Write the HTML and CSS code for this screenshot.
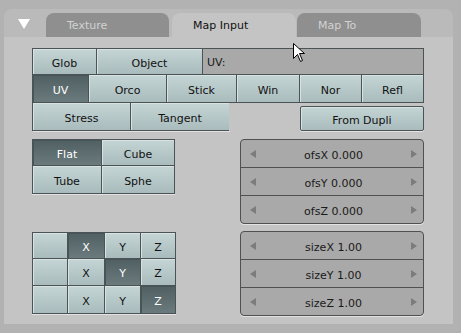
FILE: index.html
```html
<!DOCTYPE html>
<html>
<head>
    <title>Map Input</title>
    <link rel="stylesheet" href="styles.css">
</head>
<body>
    <div class="panel">
        <div class="header">
            <span class="toggle">
                <svg width="12" height="10" viewBox="0 0 12 10"><polygon points="0,0 12,0 6,10" fill="#fff"/></svg>
            </span>
            <div class="tab tab-texture">Texture</div>
            <div class="tab tab-active">Map Input</div>
            <div class="tab tab-mapto">Map To</div>
        </div>

        <div class="body">
            <div class="coords">
                <div class="row row-1">
                    <div class="btn">Glob</div>
                    <div class="btn">Object</div>
                    <div class="cell-field">UV:</div>
                </div>
                <div class="row row-2">
                    <div class="btn pressed">UV</div>
                    <div class="btn">Orco</div>
                    <div class="btn">Stick</div>
                    <div class="btn">Win</div>
                    <div class="btn">Nor</div>
                    <div class="btn">Refl</div>
                </div>
                <div class="row row-3">
                    <div class="btn">Stress</div>
                    <div class="btn">Tangent</div>
                    <div class="empty"></div>
                    <div class="btn solo">From Dupli</div>
                </div>
            </div>

            <div class="lower">
                <div class="col-left">
                    <div class="grid proj">
                        <div class="btn pressed">Flat</div>
                        <div class="btn">Cube</div>
                        <div class="btn">Tube</div>
                        <div class="btn">Sphe</div>
                    </div>

                    <div class="grid axes">
                        <div class="btn"></div>
                        <div class="btn pressed">X</div>
                        <div class="btn">Y</div>
                        <div class="btn">Z</div>
                        <div class="btn"></div>
                        <div class="btn">X</div>
                        <div class="btn pressed">Y</div>
                        <div class="btn">Z</div>
                        <div class="btn"></div>
                        <div class="btn">X</div>
                        <div class="btn">Y</div>
                        <div class="btn pressed">Z</div>
                    </div>
                </div>

                <div class="col-right">
                    <div class="num-group">
                        <div class="num"><span class="arrow-l"></span><span class="num-label">ofsX 0.000</span><span class="arrow-r"></span></div>
                        <div class="num"><span class="arrow-l"></span><span class="num-label">ofsY 0.000</span><span class="arrow-r"></span></div>
                        <div class="num"><span class="arrow-l"></span><span class="num-label">ofsZ 0.000</span><span class="arrow-r"></span></div>
                    </div>
                    <div class="num-group size-group">
                        <div class="num"><span class="arrow-l"></span><span class="num-label">sizeX 1.00</span><span class="arrow-r"></span></div>
                        <div class="num"><span class="arrow-l"></span><span class="num-label">sizeY 1.00</span><span class="arrow-r"></span></div>
                        <div class="num"><span class="arrow-l"></span><span class="num-label">sizeZ 1.00</span><span class="arrow-r"></span></div>
                    </div>
                </div>
            </div>
        </div>
    </div>

    <svg class="cursor" width="13" height="20" viewBox="0 0 13 20">
        <path d="M0.5,0.5 L0.5,15.5 L4.5,11.5 L7.5,18.5 L9.5,17.5 L6.5,10.5 L11.5,10.5 Z" fill="#fff" stroke="#000" stroke-width="1"/>
    </svg>
</body>
</html>
```

FILE: styles.css
```css
html {
    background: #b2b2b2;
}

body {
    margin: 0;
    padding: 9px 0 0 4px;
    font-family: "DejaVu Sans", sans-serif;
    font-size: 11px;
    color: #111;
}

.panel {
    width: 449px;
}

/* header with tabs */
.header {
    height: 28px;
    background: #bababa;
    border-radius: 8px 8px 0 0;
    display: flex;
    align-items: flex-end;
    padding-left: 14px;
    box-sizing: border-box;
}

.toggle {
    align-self: flex-start;
    margin-top: 10px;
    width: 12px;
    height: 10px;
    margin-right: 16px;
    display: block;
    line-height: 0;
}

.tab {
    height: 24px;
    box-sizing: border-box;
    padding: 6px 0 0 21px;
    line-height: 14px;
    border-radius: 8px 8px 0 0;
    background: #8f8f8f;
    color: #d2d2d2;
}

.tab-texture {
    width: 123px;
    margin-right: 3px;
}

.tab-active {
    width: 124px;
    margin-right: 1px;
    background: #c4c4c4;
    color: #111;
}

.tab-mapto {
    width: 124px;
}

/* panel body */
.body {
    background: #c4c4c4;
    height: 287px;
    box-sizing: border-box;
    padding: 11px 0 0 28px;
}

.coords {
    width: 392px;
    box-sizing: border-box;
    border-top: 1px solid #4b5354;
    border-left: 1px solid #4b5354;
}

.row {
    display: grid;
}

.row-1 {
    grid-template-columns: 64px 106px 221px;
    height: 26px;
}

.row-2 {
    grid-template-columns: 56px 78px 70px 63px 62px 62px;
    height: 28px;
}

.row-3 {
    grid-template-columns: 98px 99px 70px 124px;
    height: 28px;
}

.btn {
    box-sizing: border-box;
    border-right: 1px solid #4b5354;
    border-bottom: 1px solid #4b5354;
    background: linear-gradient(#c5d5d6, #a9bbbc);
    box-shadow: inset 1px 1px 0 #d7e3e3;
    display: flex;
    align-items: center;
    justify-content: center;
    padding-top: 3px;
    color: #111;
}

.btn.pressed {
    background: linear-gradient(#4f5f62, #6b7b7d);
    box-shadow: inset 1px 1px 0 #46555a;
    color: #fff;
}

.cell-field {
    box-sizing: border-box;
    border-right: 1px solid #4b5354;
    border-bottom: 1px solid #4b5354;
    background: #a9a9a9;
    padding: 7px 0 0 4px;
    color: #1a1a1a;
}

.row-3 .btn:nth-child(-n+2) {
    box-shadow: inset 1px 1px 0 #d7e3e3, 0 1px 0 #e2e2e2;
}

.empty {
    margin-left: -1px;
    background: #c4c4c4;
}

.btn.solo {
    margin-top: 3px;
    height: 25px;
    border: 1px solid #4b5354;
    border-radius: 2px;
    box-shadow: inset 1px 1px 0 #d7e3e3, 0 1px 0 #e2e2e2;
}

/* lower two columns */
.lower {
    margin-top: 8px;
    width: 392px;
    display: grid;
    grid-template-columns: 144px 184px;
    justify-content: space-between;
}

.grid {
    display: grid;
    box-sizing: border-box;
    border-top: 1px solid #4b5354;
    border-left: 1px solid #4b5354;
    box-shadow: 0 1px 0 #e2e2e2;
}

.proj {
    width: 143px;
    grid-template-columns: 69px 73px;
    grid-template-rows: 26px 28px;
}

.axes {
    margin-top: 38px;
    width: 144px;
    grid-template-columns: 35px 37px 36px 35px;
    grid-template-rows: 26px 27px 28px;
}

.num-group {
    border: 1px solid #505050;
    border-radius: 4px;
    overflow: hidden;
    background: #a9a9a9;
    box-shadow: 0 1px 0 #e2e2e2;
}

.size-group {
    margin-top: 7px;
}

.num {
    height: 27px;
    display: flex;
    align-items: center;
    padding: 0 6px 0 9px;
    color: #1a1a1a;
}

.num + .num {
    height: 27px;
    border-top: 1px solid #505050;
}

.num-label {
    flex: 1;
    text-align: center;
    padding-top: 4px;
}

.arrow-l {
    width: 0;
    height: 0;
    border-top: 4px solid transparent;
    border-bottom: 4px solid transparent;
    border-right: 6px solid #7c7c7c;
}

.arrow-r {
    width: 0;
    height: 0;
    border-top: 4px solid transparent;
    border-bottom: 4px solid transparent;
    border-left: 6px solid #7c7c7c;
}

.cursor {
    position: absolute;
    left: 293px;
    top: 43px;
}
```
